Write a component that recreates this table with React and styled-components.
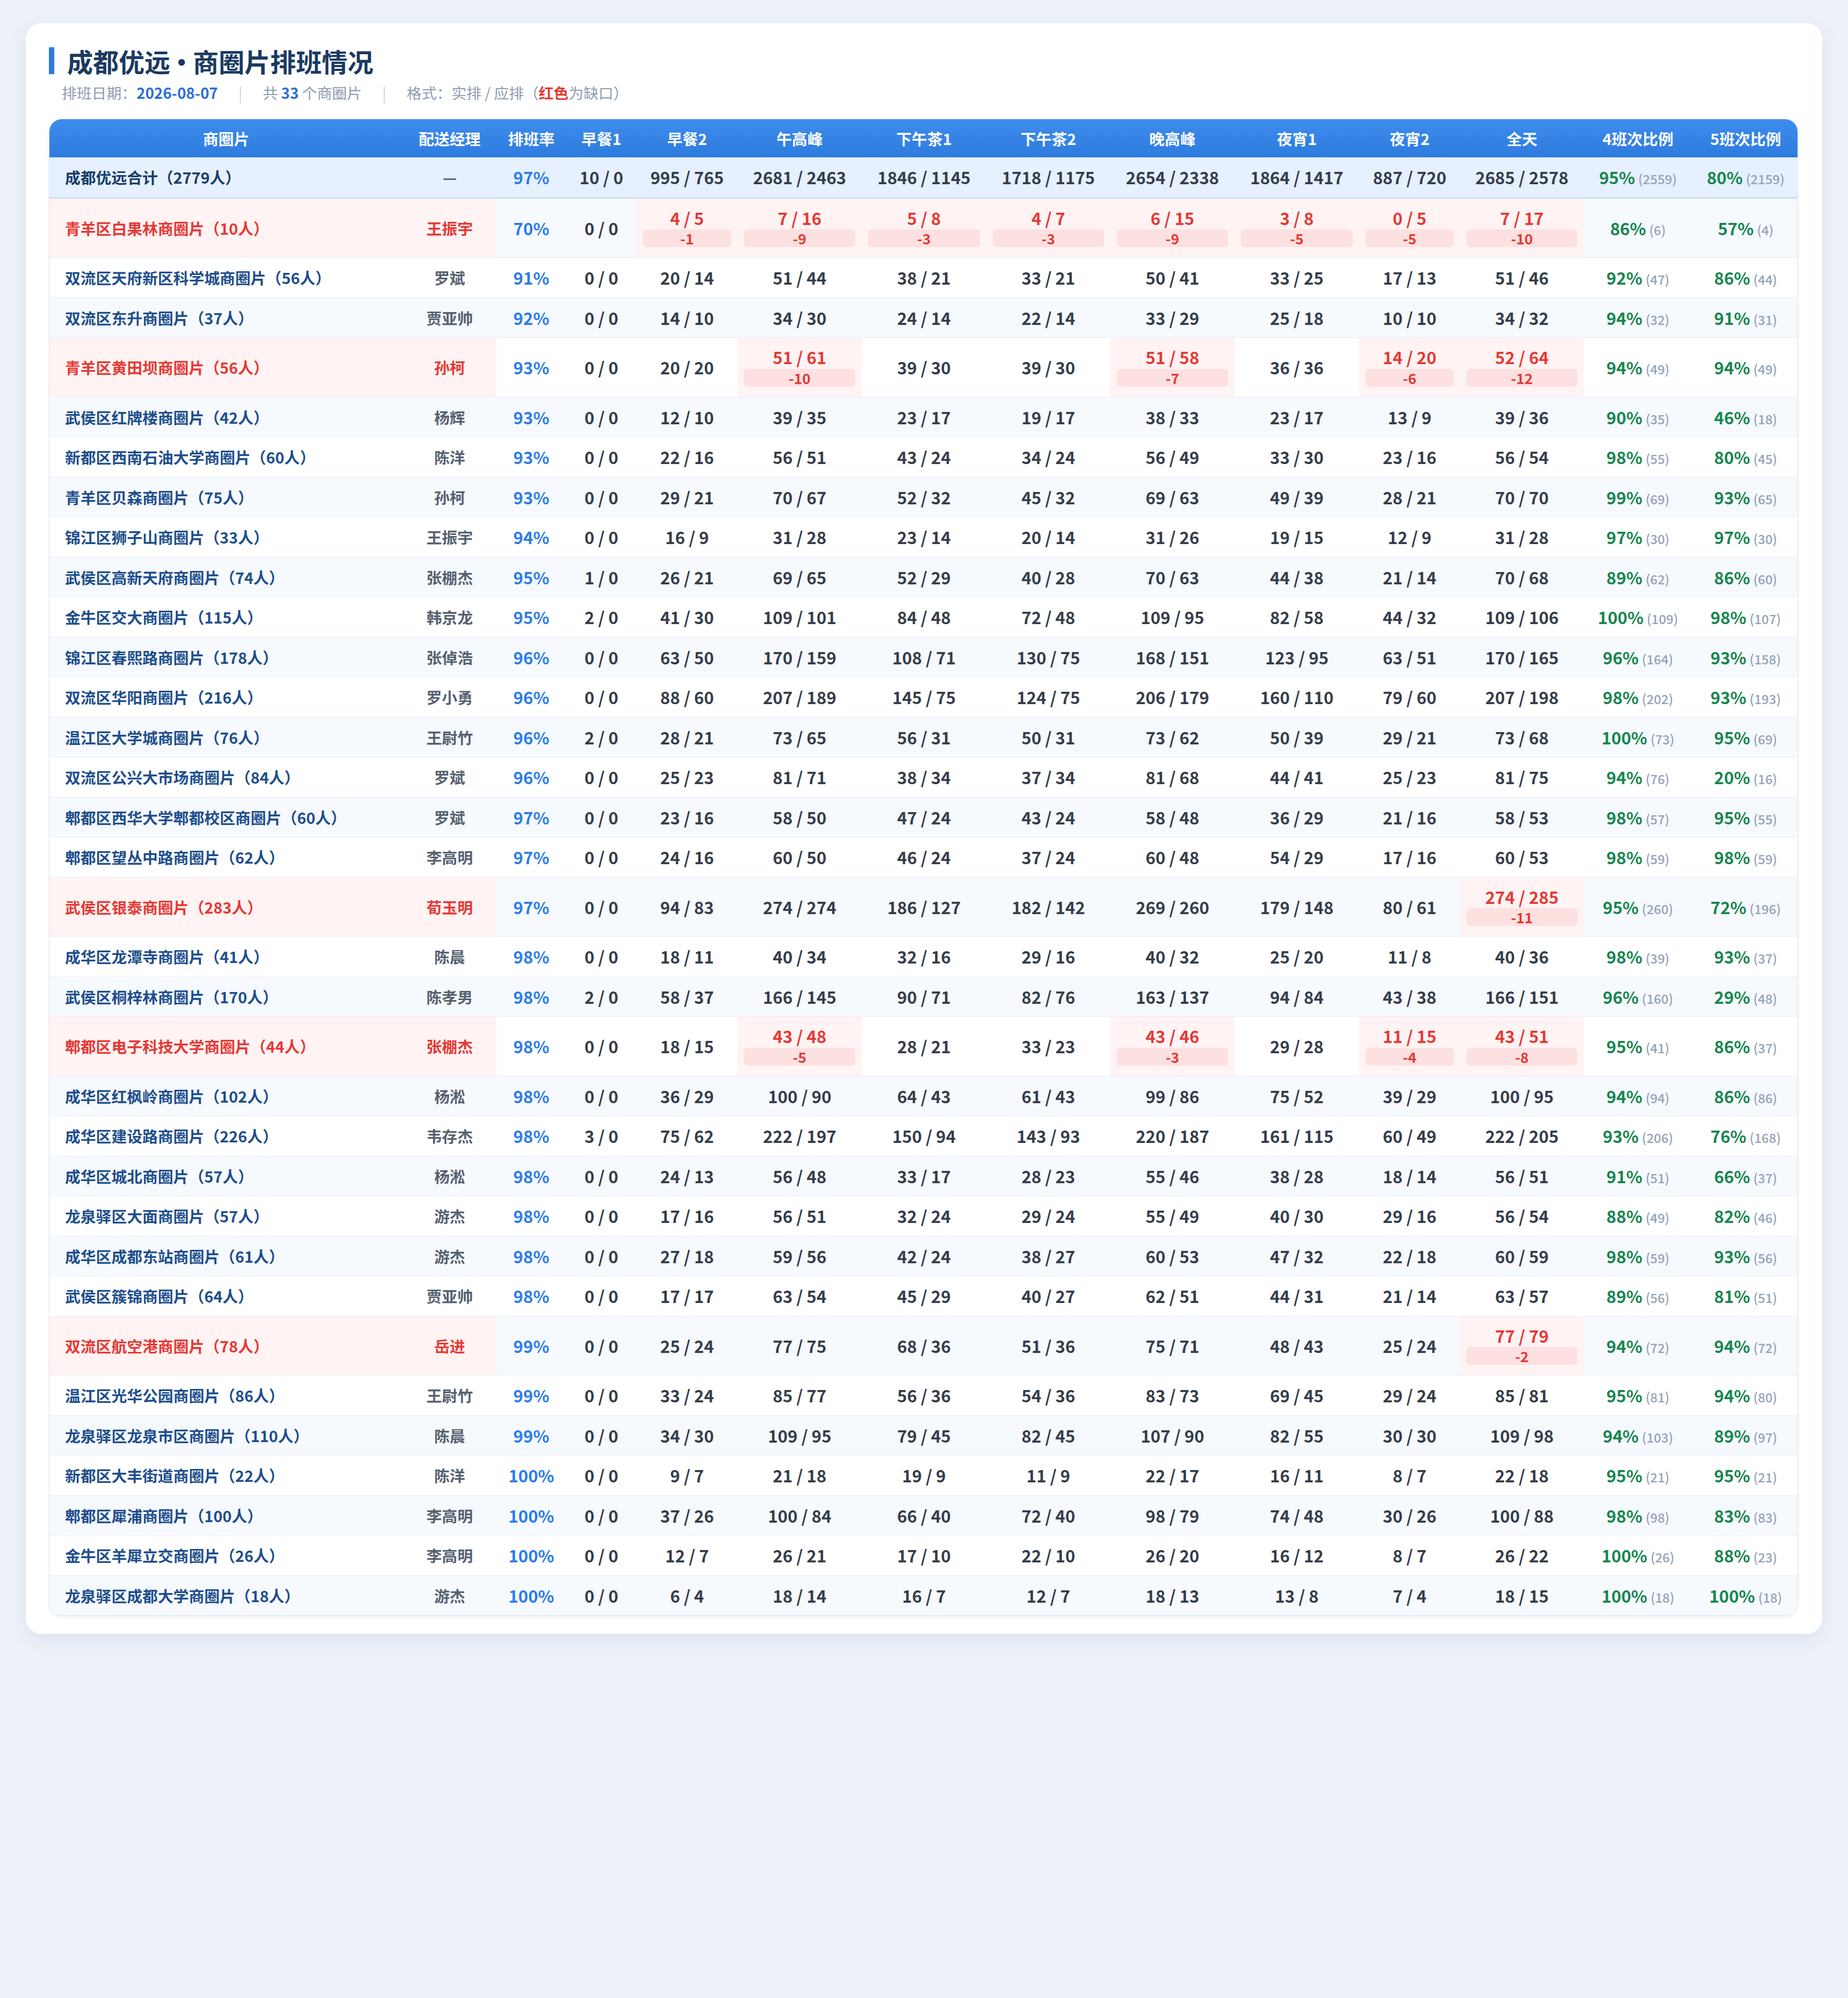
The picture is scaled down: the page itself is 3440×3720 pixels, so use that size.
import styled, { createGlobalStyle, css } from "styled-components";

const GlobalStyle = createGlobalStyle`
  body {
    margin: 0;
    background: #edf2f9;
    font-family: "Noto Sans CJK SC", "Noto Sans", sans-serif;
  }
`;

const Page = styled.div`
  min-height: 3720px;
  box-sizing: border-box;
  padding: 43px 48px;
`;

const Card = styled.div`
  background: #ffffff;
  border-radius: 29px;
  padding: 45px 45px 33px 43px;
  box-shadow: 0 10px 36px rgba(40, 70, 120, 0.09);
`;

const Title = styled.h1`
  margin: 0;
  padding-left: 24px;
  border-left: 10px solid #2f7be0;
  font-size: 48px;
  line-height: 50px;
  font-weight: 700;
  color: #1b3a62;
`;

const Dot = styled.span`
  margin: 0 -3px;
`;

const SubLine = styled.div`
  margin: 12px 0 0;
  padding-left: 24px;
  font-size: 27.8px;
  line-height: 44px;
  color: #8f9bb0;
`;

const Hl = styled.b`
  font-weight: 700;
  color: ${(p) => (p.$red ? "#e53935" : "#2b6fd6")};
`;

const Sep = styled.span`
  margin: 0 38px;
  color: #c9d2de;
`;

const TableWrap = styled.div`
  margin-top: 27px;
  border: 1px solid #dde7f3;
  border-radius: 24px;
  overflow: hidden;
  box-shadow: 0 3px 6px rgba(30, 60, 120, 0.06);
`;

const Table = styled.table`
  width: 100%;
  table-layout: fixed;
  border-collapse: separate;
  border-spacing: 0;
`;

const HeadRow = styled.tr`
  background: linear-gradient(180deg, #3e8cec 0%, #2e7bdf 100%);
`;

const Th = styled.th`
  padding: 17.75px 12px;
  line-height: 35.5px;
  font-size: 28.8px;
  font-weight: 700;
  color: #ffffff;
  text-align: center;
  white-space: nowrap;
`;

const Row = styled.tr`
  background: ${(p) => (p.$total ? "#e6f0fe" : p.$stripe ? "#f6f9fe" : "#ffffff")};
`;

const Td = styled.td`
  padding: 19px 12px;
  font-size: 31.2px;
  line-height: 35.5px;
  text-align: center;
  vertical-align: middle;
  white-space: nowrap;
  font-weight: 700;
  border-bottom: ${(p) => (p.$total ? "3px solid #d0e0f4" : "1px solid #e8eef6")};
  ${(p) =>
    p.$alert &&
    css`
      background: #fff3f3;
    `}
`;

const NameCell = styled(Td)`
  text-align: left;
  padding-left: 29px;
  font-size: 28.8px;
  color: ${(p) => (p.$alert ? "#e53935" : p.$total ? "#173d6b" : "#1e4e8c")};
`;

const MgrCell = styled(Td)`
  font-size: 28.8px;
  color: ${(p) => (p.$alert ? "#e53935" : "#566170")};
`;

const RateCell = styled(Td)`
  color: #2b7de9;
`;

const CountCell = styled(Td)`
  color: ${(p) => (p.$alert ? "#e53935" : "#353d4a")};
`;

const Value = styled.div`
  margin-top: -1px;
`;

const Badge = styled.div`
  margin-top: 4px;
  height: 33px;
  line-height: 33px;
  border-radius: 7px;
  background: #fde0e0;
  color: #e53935;
  font-size: 26.4px;
  font-weight: 700;
`;

const Pct = styled.span`
  color: #17864e;
`;

const Num = styled.span`
  margin-left: 6px;
  font-size: 24px;
  line-height: 1;
  font-weight: 500;
  color: #95a2b6;
`;

const widths = [658, 174, 130, 131, 188, 231, 232, 231, 231, 232, 188, 230, 202, 199];
const heads = [
  "商圈片", "配送经理", "排班率", "早餐1", "早餐2", "午高峰", "下午茶1",
  "下午茶2", "晚高峰", "夜宵1", "夜宵2", "全天", "4班次比例", "5班次比例",
];

const total = {
  name: "成都优远合计（2779人）",
  mgr: "—",
  rate: "97%",
  counts: [[10, 0], [995, 765], [2681, 2463], [1846, 1145], [1718, 1175], [2654, 2338], [1864, 1417], [887, 720], [2685, 2578]],
  r4: [95, 2559],
  r5: [80, 2159],
};

// name, manager, rate, 9 shift counts (actual/required), 4-shift, 5-shift
const raw = [
  ["青羊区白果林商圈片（10人）", "王振宇", 70, "0/0 4/5 7/16 5/8 4/7 6/15 3/8 0/5 7/17", [86, 6], [57, 4]],
  ["双流区天府新区科学城商圈片（56人）", "罗斌", 91, "0/0 20/14 51/44 38/21 33/21 50/41 33/25 17/13 51/46", [92, 47], [86, 44]],
  ["双流区东升商圈片（37人）", "贾亚帅", 92, "0/0 14/10 34/30 24/14 22/14 33/29 25/18 10/10 34/32", [94, 32], [91, 31]],
  ["青羊区黄田坝商圈片（56人）", "孙柯", 93, "0/0 20/20 51/61 39/30 39/30 51/58 36/36 14/20 52/64", [94, 49], [94, 49]],
  ["武侯区红牌楼商圈片（42人）", "杨辉", 93, "0/0 12/10 39/35 23/17 19/17 38/33 23/17 13/9 39/36", [90, 35], [46, 18]],
  ["新都区西南石油大学商圈片（60人）", "陈洋", 93, "0/0 22/16 56/51 43/24 34/24 56/49 33/30 23/16 56/54", [98, 55], [80, 45]],
  ["青羊区贝森商圈片（75人）", "孙柯", 93, "0/0 29/21 70/67 52/32 45/32 69/63 49/39 28/21 70/70", [99, 69], [93, 65]],
  ["锦江区狮子山商圈片（33人）", "王振宇", 94, "0/0 16/9 31/28 23/14 20/14 31/26 19/15 12/9 31/28", [97, 30], [97, 30]],
  ["武侯区高新天府商圈片（74人）", "张棚杰", 95, "1/0 26/21 69/65 52/29 40/28 70/63 44/38 21/14 70/68", [89, 62], [86, 60]],
  ["金牛区交大商圈片（115人）", "韩京龙", 95, "2/0 41/30 109/101 84/48 72/48 109/95 82/58 44/32 109/106", [100, 109], [98, 107]],
  ["锦江区春熙路商圈片（178人）", "张倬浩", 96, "0/0 63/50 170/159 108/71 130/75 168/151 123/95 63/51 170/165", [96, 164], [93, 158]],
  ["双流区华阳商圈片（216人）", "罗小勇", 96, "0/0 88/60 207/189 145/75 124/75 206/179 160/110 79/60 207/198", [98, 202], [93, 193]],
  ["温江区大学城商圈片（76人）", "王尉竹", 96, "2/0 28/21 73/65 56/31 50/31 73/62 50/39 29/21 73/68", [100, 73], [95, 69]],
  ["双流区公兴大市场商圈片（84人）", "罗斌", 96, "0/0 25/23 81/71 38/34 37/34 81/68 44/41 25/23 81/75", [94, 76], [20, 16]],
  ["郫都区西华大学郫都校区商圈片（60人）", "罗斌", 97, "0/0 23/16 58/50 47/24 43/24 58/48 36/29 21/16 58/53", [98, 57], [95, 55]],
  ["郫都区望丛中路商圈片（62人）", "李高明", 97, "0/0 24/16 60/50 46/24 37/24 60/48 54/29 17/16 60/53", [98, 59], [98, 59]],
  ["武侯区银泰商圈片（283人）", "荀玉明", 97, "0/0 94/83 274/274 186/127 182/142 269/260 179/148 80/61 274/285", [95, 260], [72, 196]],
  ["成华区龙潭寺商圈片（41人）", "陈晨", 98, "0/0 18/11 40/34 32/16 29/16 40/32 25/20 11/8 40/36", [98, 39], [93, 37]],
  ["武侯区桐梓林商圈片（170人）", "陈孝男", 98, "2/0 58/37 166/145 90/71 82/76 163/137 94/84 43/38 166/151", [96, 160], [29, 48]],
  ["郫都区电子科技大学商圈片（44人）", "张棚杰", 98, "0/0 18/15 43/48 28/21 33/23 43/46 29/28 11/15 43/51", [95, 41], [86, 37]],
  ["成华区红枫岭商圈片（102人）", "杨淞", 98, "0/0 36/29 100/90 64/43 61/43 99/86 75/52 39/29 100/95", [94, 94], [86, 86]],
  ["成华区建设路商圈片（226人）", "韦存杰", 98, "3/0 75/62 222/197 150/94 143/93 220/187 161/115 60/49 222/205", [93, 206], [76, 168]],
  ["成华区城北商圈片（57人）", "杨淞", 98, "0/0 24/13 56/48 33/17 28/23 55/46 38/28 18/14 56/51", [91, 51], [66, 37]],
  ["龙泉驿区大面商圈片（57人）", "游杰", 98, "0/0 17/16 56/51 32/24 29/24 55/49 40/30 29/16 56/54", [88, 49], [82, 46]],
  ["成华区成都东站商圈片（61人）", "游杰", 98, "0/0 27/18 59/56 42/24 38/27 60/53 47/32 22/18 60/59", [98, 59], [93, 56]],
  ["武侯区簇锦商圈片（64人）", "贾亚帅", 98, "0/0 17/17 63/54 45/29 40/27 62/51 44/31 21/14 63/57", [89, 56], [81, 51]],
  ["双流区航空港商圈片（78人）", "岳进", 99, "0/0 25/24 77/75 68/36 51/36 75/71 48/43 25/24 77/79", [94, 72], [94, 72]],
  ["温江区光华公园商圈片（86人）", "王尉竹", 99, "0/0 33/24 85/77 56/36 54/36 83/73 69/45 29/24 85/81", [95, 81], [94, 80]],
  ["龙泉驿区龙泉市区商圈片（110人）", "陈晨", 99, "0/0 34/30 109/95 79/45 82/45 107/90 82/55 30/30 109/98", [94, 103], [89, 97]],
  ["新都区大丰街道商圈片（22人）", "陈洋", 100, "0/0 9/7 21/18 19/9 11/9 22/17 16/11 8/7 22/18", [95, 21], [95, 21]],
  ["郫都区犀浦商圈片（100人）", "李高明", 100, "0/0 37/26 100/84 66/40 72/40 98/79 74/48 30/26 100/88", [98, 98], [83, 83]],
  ["金牛区羊犀立交商圈片（26人）", "李高明", 100, "0/0 12/7 26/21 17/10 22/10 26/20 16/12 8/7 26/22", [100, 26], [88, 23]],
  ["龙泉驿区成都大学商圈片（18人）", "游杰", 100, "0/0 6/4 18/14 16/7 12/7 18/13 13/8 7/4 18/15", [100, 18], [100, 18]],
];

const rows = raw.map(([name, mgr, rate, c, r4, r5]) => ({
  name,
  mgr,
  rate: `${rate}%`,
  counts: c.split(" ").map((p) => p.split("/").map(Number)),
  r4,
  r5,
}));

function Ratio({ value, $total }) {
  return (
    <Td $total={$total}>
      <Pct>{value[0]}%</Pct>
      <Num>({value[1]})</Num>
    </Td>
  );
}

function DataRow({ row, index, total }) {
  const short = row.counts.some(([a, b]) => a < b);
  return (
    <Row $stripe={index % 2 === 0} $total={total}>
      <NameCell $alert={short} $total={total}>{row.name}</NameCell>
      <MgrCell $alert={short} $total={total}>{row.mgr}</MgrCell>
      <RateCell $total={total}>{row.rate}</RateCell>
      {row.counts.map(([a, b], i) => {
        const gap = a < b;
        return (
          <CountCell key={i} $alert={gap} $total={total}>
            {gap ? (
              <>
                <Value>
                  {a} / {b}
                </Value>
                <Badge>-{b - a}</Badge>
              </>
            ) : (
              `${a} / ${b}`
            )}
          </CountCell>
        );
      })}
      <Ratio value={row.r4} $total={total} />
      <Ratio value={row.r5} $total={total} />
    </Row>
  );
}

export default function App() {
  return (
    <>
      <GlobalStyle />
      <Page>
        <Card>
          <Title>
            成都优远<Dot>•</Dot>商圈片排班情况
          </Title>
          <SubLine>
            排班日期：<Hl>2026-08-07</Hl>
            <Sep>|</Sep>
            共 <Hl>33</Hl> 个商圈片
            <Sep>|</Sep>
            格式：实排 / 应排（<Hl $red>红色</Hl>为缺口）
          </SubLine>
          <TableWrap>
            <Table>
              <colgroup>
                {widths.map((w, i) => (
                  <col key={i} style={{ width: `${w}px` }} />
                ))}
              </colgroup>
              <thead>
                <HeadRow>
                  {heads.map((h) => (
                    <Th key={h}>{h}</Th>
                  ))}
                </HeadRow>
              </thead>
              <tbody>
                <DataRow row={total} index={-1} total />
                {rows.map((r, i) => (
                  <DataRow key={r.name} row={r} index={i} />
                ))}
              </tbody>
            </Table>
          </TableWrap>
        </Card>
      </Page>
    </>
  );
}
